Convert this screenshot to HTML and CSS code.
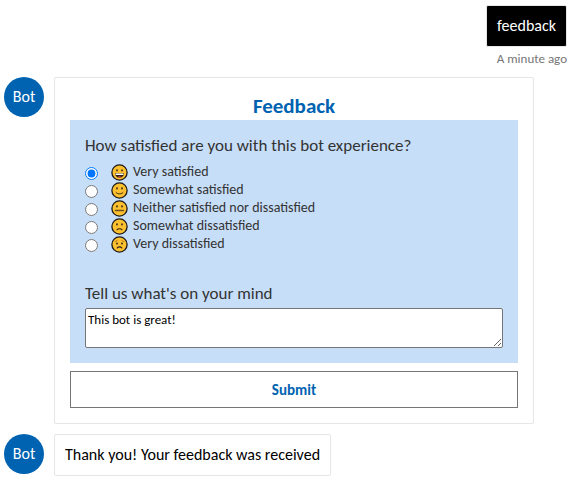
FILE: index.html
```html
<!DOCTYPE html>
<html lang="en">
<head>
<meta charset="utf-8">
<title>Feedback bot</title>
<link rel="stylesheet" href="styles.css">
</head>
<body>
<svg class="defs" aria-hidden="true">
  <defs>
    <g id="face">
      <circle cx="8.5" cy="8.5" r="7.6" fill="#fdc02f" stroke="#1c1a17" stroke-width="1.3"/>
    </g>
    <g id="eyes" fill="#2b2112">
      <ellipse cx="6" cy="6.4" rx="0.8" ry="1.1"/>
      <ellipse cx="11" cy="6.4" rx="0.8" ry="1.1"/>
    </g>
  </defs>
</svg>
<main class="chat">
  <div class="sent">
    <div class="bubble bubble-user">feedback</div>
    <div class="time">A minute ago</div>
  </div>

  <div class="received">
    <div class="avatar">Bot</div>
    <form class="card">
      <h1 class="title">Feedback</h1>
      <div class="panel">
        <fieldset class="choices">
          <legend class="prompt">How satisfied are you with this bot experience?</legend>
          <label class="choice"><input type="radio" name="rating" checked>
            <svg class="emoji" viewBox="0 0 17 17" aria-hidden="true"><use href="#face"/><use href="#eyes"/><path d="M4 9.2h9c0 2.8-2 4.500-4.500 4.500S4 12 4 9.200z" fill="#2b2112"/><path d="M4.600 9.500h7.800v1.500H4.600z" fill="#fff"/><path d="M6.500 13c.8-1 3.200-1 4 0-1 .7-3 .7-4 0z" fill="#e8504f"/></svg>
            <span>Very satisfied</span></label>
          <label class="choice"><input type="radio" name="rating">
            <svg class="emoji" viewBox="0 0 17 17" aria-hidden="true"><use href="#face"/><use href="#eyes"/><path d="M5 10.500c1.600 1.900 5.400 1.900 7 0" fill="none" stroke="#2b2112" stroke-width="1" stroke-linecap="round"/></svg>
            <span>Somewhat satisfied</span></label>
          <label class="choice"><input type="radio" name="rating">
            <svg class="emoji" viewBox="0 0 17 17" aria-hidden="true"><use href="#face"/><use href="#eyes"/><path d="M4.500 10.500h8" fill="none" stroke="#6b501e" stroke-width="1.300" stroke-linecap="round"/></svg>
            <span>Neither satisfied nor dissatisfied</span></label>
          <label class="choice"><input type="radio" name="rating">
            <svg class="emoji" viewBox="0 0 17 17" aria-hidden="true"><use href="#face"/><use href="#eyes"/><path d="M6 11.800c1-1.500 4-1.500 5 0" fill="none" stroke="#2b2112" stroke-width="1.100" stroke-linecap="round"/></svg>
            <span>Somewhat dissatisfied</span></label>
          <label class="choice"><input type="radio" name="rating">
            <svg class="emoji" viewBox="0 0 17 17" aria-hidden="true"><use href="#face"/><g fill="#2b2112"><circle cx="6" cy="7.500" r="0.900"/><circle cx="11" cy="7.500" r="0.900"/></g><path d="M4 5.500c1 0 1.800-.4 2.400-1.300M13 5.500c-1 0-1.800-.4-2.400-1.300" fill="none" stroke="#b87a1a" stroke-width="1" stroke-linecap="round"/><path d="M6.200 12c1-1.500 3.600-1.500 4.600 0" fill="none" stroke="#2b2112" stroke-width="1.100" stroke-linecap="round"/></svg>
            <span>Very dissatisfied</span></label>
        </fieldset>
        <label class="prompt" for="comment">Tell us what's on your mind</label>
        <textarea class="comment" id="comment">This bot is great!</textarea>
      </div>
      <button class="submit" type="button">Submit</button>
    </form>
  </div>

  <div class="received">
    <div class="avatar">Bot</div>
    <div class="bubble">Thank you! Your feedback was received</div>
  </div>
</main>
</body>
</html>
```

FILE: styles.css
```css
* {
  box-sizing: border-box;
}

body {
  margin: 0;
  background: #fff;
  color: #000;
  font-family: Carlito, Lato, "Liberation Sans", sans-serif;
  font-size: 16px;
  line-height: 20px;
}

.defs {
  position: absolute;
  width: 0;
  height: 0;
}

.chat {
  display: flex;
  flex-direction: column;
  gap: 10px;
  padding: 5px 5px 4px 4px;
}

.sent {
  display: flex;
  flex-direction: column;
  align-items: flex-end;
}

.bubble {
  padding: 10px;
  border: 1px solid #e6e6e6;
  border-radius: 2px;
  background: #fff;
}

.bubble-user {
  background: #000;
  color: #fff;
}

.time {
  padding-top: 4px;
  color: #767676;
  font-size: 13px;
  line-height: 16px;
}

.received {
  display: flex;
  align-items: flex-start;
  gap: 10px;
}

.avatar {
  display: flex;
  flex: none;
  align-items: center;
  justify-content: center;
  width: 40px;
  height: 40px;
  border-radius: 50%;
  background: #0063b1;
  color: #fff;
}

.card {
  flex: 1;
  max-width: 480px;
  padding: 15px;
  border: 1px solid #e6e6e6;
  border-radius: 2px;
}

.title {
  margin: 0;
  color: #0063b1;
  font-size: 21px;
  font-weight: 700;
  line-height: 27px;
  text-align: center;
}

.panel {
  padding: 15px;
  background: #c7def8;
  color: #333;
}

.choices {
  min-width: 0;
  margin: 0 0 30px;
  padding: 0;
  border: 0;
}

.prompt {
  display: block;
  margin-bottom: 3px;
  padding: 0;
  font-size: 17px;
  line-height: 22px;
}

.choices .prompt {
  margin-bottom: 6px;
}

.choice {
  display: flex;
  align-items: center;
  height: 18px;
  font-size: 14px;
  line-height: 18px;
}

.choice input {
  flex: none;
  width: 13px;
  height: 13px;
  margin: 2px 13px 0 0;
}

.emoji {
  flex: none;
  width: 17px;
  height: 17px;
  margin-right: 5px;
}

.comment {
  display: block;
  width: 100%;
  height: 40px;
  margin: 0;
  padding: 2px;
  border: 1px solid #767676;
  border-radius: 2px;
  background: #fff;
  color: #000;
  font-family: inherit;
  font-size: 13px;
  line-height: 18px;
  resize: both;
}

.submit {
  display: block;
  width: 100%;
  height: 37px;
  margin-top: 8px;
  border: 1px solid #767676;
  background: #fff;
  color: #0063b1;
  font-family: inherit;
  font-size: 15px;
  font-weight: 700;
}
```
